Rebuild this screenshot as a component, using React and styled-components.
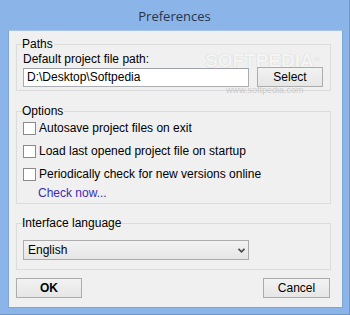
import React from 'react';
import styled, { createGlobalStyle } from 'styled-components';

const GlobalStyle = createGlobalStyle`
  html, body {
    margin: 0;
    padding: 0;
    background: #8bb4e9;
  }
  body {
    font-family: "Liberation Sans", Arial, sans-serif;
    font-size: 12px;
    color: #000;
  }
`;

export default function App() {
  return (
    <Window>
      <GlobalStyle />
      <TitleBar>Preferences</TitleBar>
      <Client>
        <Group $height={52} $top={6}>
          <Legend>Paths</Legend>
          <FieldLabel>Default project file path:</FieldLabel>
          <PathRow>
            <TextInput>D:\Desktop\Softpedia</TextInput>
            <Button $width={66}>Select</Button>
          </PathRow>
        </Group>

        <Group $height={98} $top={13}>
          <Legend>Options</Legend>
          <CheckList>
            <CheckRow>
              <Box />
              <span>Autosave project files on exit</span>
            </CheckRow>
            <CheckRow>
              <Box />
              <span>Load last opened project file on startup</span>
            </CheckRow>
            <CheckRow $gap={10}>
              <Box />
              <span>Periodically check for new versions online</span>
            </CheckRow>
          </CheckList>
          <Link>Check now...</Link>
        </Group>

        <Group $height={52} $top={12}>
          <Legend>Interface language</Legend>
          <Combo>
            <span>English</span>
            <svg width="7" height="5" viewBox="0 0 7 5">
              <path d="M0.5 0.8 L3.5 3.8 L6.5 0.8" fill="none" stroke="#4a4a4a" strokeWidth="1.6" />
            </svg>
          </Combo>
        </Group>

        <Footer>
          <Button $width={66} $bold>OK</Button>
          <Button $width={67}>Cancel</Button>
        </Footer>
      </Client>

      <Watermark>SOFTPEDIA<sup>™</sup></Watermark>
      <WatermarkUrl>www.softpedia.com</WatermarkUrl>
    </Window>
  );
}

const Window = styled.div`
  position: relative;
  width: 350px;
  height: 315px;
  box-sizing: border-box;
  background: #8bb4e9;
  border-right: 1px solid #6f94c6;
  border-bottom: 1px solid #6f94c6;
  display: flex;
  flex-direction: column;
  overflow: hidden;
`;

const TitleBar = styled.div`
  height: 30px;
  display: flex;
  align-items: center;
  justify-content: center;
  padding-top: 1px;
  box-sizing: border-box;
  font-family: "Open Sans", "Liberation Sans", sans-serif;
  font-size: 13px;
  color: #2a3646;
`;

const Client = styled.div`
  margin: 0 6px 0 8px;
  height: 278px;
  box-sizing: border-box;
  background: #f0f0f0;
  border: 1px solid #7fa4d6;
  border-top-color: #a6c3ea;
  padding: 0 11px 0 7px;
  display: flex;
  flex-direction: column;
`;

const Group = styled.fieldset`
  margin: ${(p) => p.$top}px 0 0 0;
  padding: 0 6px 0 6px;
  height: ${(p) => p.$height}px;
  box-sizing: content-box;
  border: 1px solid #dcdcdc;
  border-radius: 0;
  min-width: 0;
  display: flex;
  flex-direction: column;
`;

const Legend = styled.legend`
  padding: 0 1px 0 0;
  margin-left: -1px;
  font-size: 12px;
  line-height: 14px;
  color: #000;
`;

const FieldLabel = styled.div`
  margin-top: 1px;
  line-height: 14px;
`;

const PathRow = styled.div`
  display: flex;
  align-items: center;
  gap: 8px;
  margin-top: 1px;
`;

const TextInput = styled.div`
  width: 226px;
  height: 19px;
  box-sizing: border-box;
  background: #fff;
  border: 1px solid #abadb3;
  border-top-color: #9fa2aa;
  padding: 0 3px;
  line-height: 17px;
  font-size: 12px;
`;

const Button = styled.div`
  width: ${(p) => p.$width}px;
  height: 20px;
  box-sizing: border-box;
  border: 1px solid #acacac;
  background: linear-gradient(#f2f2f2, #e6e6e6);
  display: flex;
  align-items: center;
  justify-content: center;
  font-weight: ${(p) => (p.$bold ? 700 : 400)};
  font-size: 12px;
  color: #000;
`;

const CheckList = styled.div`
  display: flex;
  flex-direction: column;
  margin-top: 4px;
`;

const CheckRow = styled.label`
  display: flex;
  align-items: center;
  gap: 3px;
  height: 13px;
  line-height: 13px;
  & + & {
    margin-top: ${(p) => p.$gap ?? 9}px;
  }
`;

const Box = styled.span`
  width: 13px;
  height: 13px;
  box-sizing: border-box;
  background: #fff;
  border: 1px solid #8a8a8a;
  flex: none;
`;

const Link = styled.div`
  margin: 5px 0 0 15px;
  color: #3b2cb0;
  line-height: 14px;
`;

const Combo = styled.div`
  margin-top: 10px;
  width: 226px;
  height: 20px;
  box-sizing: border-box;
  border: 1px solid #acacac;
  background: linear-gradient(#f2f2f2, #e6e6e6);
  display: flex;
  align-items: center;
  justify-content: space-between;
  padding: 0 3px 0 4px;
`;

const Footer = styled.div`
  display: flex;
  justify-content: space-between;
  margin-top: 8px;
  padding-right: 1px;
`;

const Watermark = styled.div`
  position: absolute;
  left: 205px;
  top: 51px;
  font-family: "Liberation Sans", sans-serif;
  font-weight: 700;
  font-size: 19px;
  line-height: 19px;
  color: rgba(255, 255, 255, 0.85);
  text-shadow: 0 0 1px rgba(90, 90, 90, 0.35);
  pointer-events: none;
  sup {
    font-size: 7px;
    vertical-align: top;
  }
`;

const WatermarkUrl = styled.div`
  position: absolute;
  left: 226px;
  top: 86px;
  font-family: "Liberation Sans", sans-serif;
  font-size: 9px;
  line-height: 9px;
  color: rgba(185, 185, 185, 0.7);
  pointer-events: none;
`;
